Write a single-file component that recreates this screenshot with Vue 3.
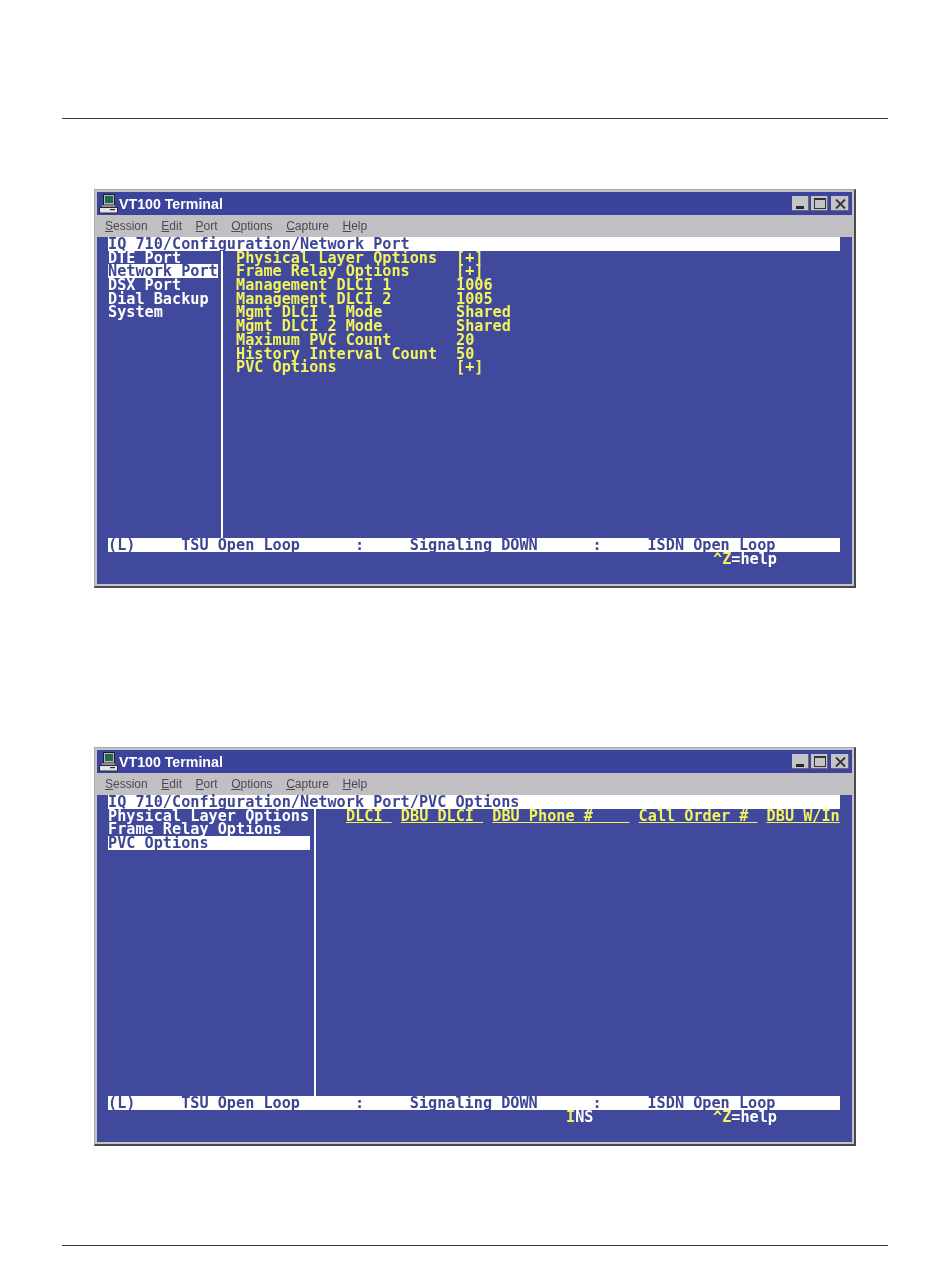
<script setup>
const windows = [
  {
    id: 'a',
    path: 'IQ 710/Configuration/Network Port',
    side: ['DTE Port', 'Network Port', 'DSX Port', 'Dial Backup', 'System'],
    selected: 'Network Port',
    sideClass: 'narrow',
    rows: [
      ['Physical Layer Options', '[+]'],
      ['Frame Relay Options', '[+]'],
      ['Management DLCI 1', '1006'],
      ['Management DLCI 2', '1005'],
      ['Mgmt DLCI 1 Mode', 'Shared'],
      ['Mgmt DLCI 2 Mode', 'Shared'],
      ['Maximum PVC Count', '20'],
      ['History Interval Count', '50'],
      ['PVC Options', '[+]'],
    ],
    headers: [],
    ins: false,
  },
  {
    id: 'b',
    path: 'IQ 710/Configuration/Network Port/PVC Options',
    side: ['Physical Layer Options', 'Frame Relay Options', 'PVC Options'],
    selected: 'PVC Options',
    sideClass: 'wide',
    rows: [],
    headers: ['DLCI ', 'DBU DLCI ', 'DBU Phone #    ', 'Call Order # ', 'DBU W/In'],
    ins: true,
  },
]
const menu = [
  ['S', 'ession'],
  ['E', 'dit'],
  ['P', 'ort'],
  ['O', 'ptions'],
  ['C', 'apture'],
  ['H', 'elp'],
]
const status = '(L)     TSU Open Loop      :     Signaling DOWN      :     ISDN Open Loop'
</script>

<template>
  <div class="page">
    <div class="top-rule"></div>
    <section v-for="w in windows" :key="w.id" class="window">
      <header class="titlebar">
        <svg class="app-icon" width="20" height="20" viewBox="0 0 20 20">
          <rect x="4.5" y="0.5" width="11" height="10.5" fill="#b9b9bd" stroke="#1c1c24" />
          <rect x="6" y="2" width="8" height="7" fill="#1f6a4c" />
          <rect x="3" y="11" width="13" height="2" fill="#8d8d92" />
          <path d="M0.5 13.5 H18.5 V19 H0.5 Z" fill="#e4e4e8" stroke="#2a2a30" />
          <rect x="11" y="15" width="5" height="1.2" fill="#2a2a30" />
        </svg>
        <span class="title-text">VT100 Terminal</span>
        <div class="controls">
          <span class="btn"><i class="min"></i></span>
          <span class="btn"><i class="max"></i></span>
          <span class="btn close">
            <svg width="11" height="10" viewBox="0 0 11 10"><path d="M1 0.5 L10 9.5 M10 0.5 L1 9.5" stroke="#33333a" stroke-width="1.9" /></svg>
          </span>
        </div>
      </header>
      <nav class="menubar">
        <span v-for="m in menu" :key="m[0]" class="menu-item"><u>{{ m[0] }}</u>{{ m[1] }}</span>
      </nav>
      <div class="terminal">
        <div class="line inverse full">{{ w.path }}</div>
        <div class="body">
          <div class="side" :class="w.sideClass">
            <div v-for="s in w.side" :key="s" class="line" :class="{ inverse: s === w.selected }">{{ s }}</div>
          </div>
          <div class="content" :class="w.sideClass">
            <div v-for="r in w.rows" :key="r[0]" class="line yellow">
              <span class="label">{{ r[0] }}</span><span>{{ r[1] }}</span>
            </div>
            <div v-if="w.headers.length" class="line yellow headers">
              <span v-for="h in w.headers" :key="h" class="head">{{ h }}</span>
            </div>
          </div>
        </div>
        <div class="line inverse full">{{ status }}</div>
        <div class="line hints">
          <span class="ins"><template v-if="w.ins"><b class="yellow">I</b>NS</template></span>
          <span><b class="yellow">^Z</b>=help</span>
        </div>
      </div>
    </section>
    <div class="bottom-rule"></div>
  </div>
</template>

<style scoped>
.page {
  width: 950px;
  height: 1267px;
  background: #fff;
  overflow: hidden;
  padding-top: 118px;
  box-sizing: border-box;
}
.top-rule,
.bottom-rule {
  height: 1px;
  margin: 0 62px;
  background: #3a3a3a;
}
.window {
  width: 762px;
  height: 399px;
  box-sizing: border-box;
  margin: 70px 0 0 94px;
  padding: 2px 2px 2px 2px;
  background: #c4c4c8;
  border-top: 1px solid #a8a8a8;
  border-left: 1px solid #a8a8a8;
  border-right: 2px solid #4a4a4a;
  border-bottom: 2px solid #4a4a4a;
  display: flex;
  flex-direction: column;
  filter: blur(0.3px);
}
.window + .window {
  margin-top: 159px;
}
.bottom-rule {
  margin-top: 99px;
}
.titlebar {
  height: 23px;
  flex: none;
  background: #3b439c;
  display: flex;
  align-items: center;
  padding-left: 2px;
  color: #fff;
}
.app-icon {
  flex: none;
}
.title-text {
  font: bold 14.2px "Liberation Sans", sans-serif;
}
.controls {
  margin-left: auto;
  display: flex;
  gap: 2px;
  padding-right: 3px;
}
.btn {
  width: 17px;
  height: 15px;
  background: #c4c4c8;
  box-shadow: inset -1px -1px 0 #6a6a70;
  display: flex;
  align-items: center;
  justify-content: center;
  position: relative;
}
.btn.close {
  width: 18px;
  margin-left: 1px;
}
.min {
  width: 8px;
  height: 3px;
  background: #26262c;
  position: absolute;
  left: 4px;
  bottom: 2px;
}
.max {
  width: 12px;
  height: 11px;
  border: 1px solid #33333a;
  border-top-width: 2px;
  box-sizing: border-box;
}
.menubar {
  height: 22px;
  flex: none;
  display: flex;
  align-items: center;
  gap: 13.6px;
  padding: 0 0 0 8px;
  box-sizing: border-box;
  background: #c0c0c4;
  color: #4a4a50;
  font: 12px "Liberation Sans", sans-serif;
}
.menu-item u {
  text-underline-offset: 1px;
}
.terminal {
  flex: 1;
  background: #40499b;
  padding: 0 0 0 11px;
  color: #fff;
  font: bold 15.2px/15.7px "DejaVu Sans Mono", monospace;
}
.line {
  height: 13.7px;
  white-space: pre;
}
.full {
  width: 732px;
}
.inverse {
  background: #fff;
  color: #3d4694;
}
.body {
  display: flex;
  height: 287.7px;
}
.side {
  flex: none;
}
.side.narrow {
  width: 110px;
}
.side.wide {
  width: 202px;
}
.content {
  border-left: 2px solid #fff;
  flex: 1;
  min-width: 0;
}
.content.narrow {
  margin-left: 3px;
  padding-left: 13px;
}
.content.wide {
  margin-left: 4px;
  padding-left: 30px;
}
.label {
  display: inline-block;
  width: 220px;
}
.yellow {
  color: #f3f35c;
}
.headers {
  display: flex;
  gap: 9.15px;
}
.head {
  white-space: pre;
  text-decoration: underline;
  text-underline-offset: 1px;
}
.hints {
  position: relative;
  padding-left: 605px;
}
.ins {
  position: absolute;
  left: 458px;
}
</style>
